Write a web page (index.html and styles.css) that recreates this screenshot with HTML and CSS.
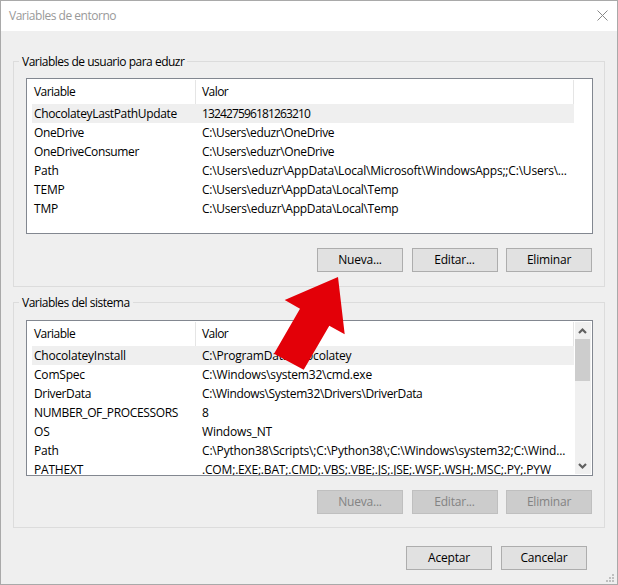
FILE: index.html
```html
<!DOCTYPE html>
<html lang="es">
<head>
<meta charset="utf-8">
<title>Variables de entorno</title>
<link rel="stylesheet" href="styles.css">
</head>
<body>
<div class="window">
  <header class="titlebar">
    <span class="title">Variables de entorno</span>
    <svg class="close" width="11" height="11" viewBox="0 0 11 11"><path d="M.5.5l10 10M10.5.5l-10 10"/></svg>
  </header>

  <main class="content">
    <fieldset class="group">
      <legend>Variables de usuario para eduzr</legend>
      <div class="list">
        <div class="table">
          <div class="row head"><span>Variable</span><span>Valor</span></div>
          <div class="row selected"><span class="tight">ChocolateyLastPathUpdate</span><span class="digits">132427596181263210</span></div>
          <div class="row"><span class="tight">OneDrive</span><span class="tight">C:\Users\eduzr\OneDrive</span></div>
          <div class="row"><span class="tight">OneDriveConsumer</span><span class="tight">C:\Users\eduzr\OneDrive</span></div>
          <div class="row"><span>Path</span><span>C:\Users\eduzr\AppData\Local\Microsoft\WindowsApps;;C:\Users\...</span></div>
          <div class="row"><span>TEMP</span><span class="snug">C:\Users\eduzr\AppData\Local\Temp</span></div>
          <div class="row"><span>TMP</span><span class="snug">C:\Users\eduzr\AppData\Local\Temp</span></div>
        </div>
      </div>
      <div class="actions">
        <button>Nueva...</button><button>Editar...</button><button>Eliminar</button>
      </div>
    </fieldset>

    <fieldset class="group system">
      <legend>Variables del sistema</legend>
      <div class="list">
        <div class="table">
          <div class="row head"><span>Variable</span><span>Valor</span></div>
          <div class="row selected"><span>ChocolateyInstall</span><span>C:\ProgramData\chocolatey</span></div>
          <div class="row"><span>ComSpec</span><span>C:\Windows\system32\cmd.exe</span></div>
          <div class="row"><span class="tight">DriverData</span><span class="tight">C:\Windows\System32\Drivers\DriverData</span></div>
          <div class="row"><span class="tight">NUMBER_OF_PROCESSORS</span><span>8</span></div>
          <div class="row"><span>OS</span><span>Windows_NT</span></div>
          <div class="row"><span>Path</span><span class="loose">C:\Python38\Scripts\;C:\Python38\;C:\Windows\system32;C:\Wind...</span></div>
          <div class="row"><span>PATHEXT</span><span class="loose">.COM;.EXE;.BAT;.CMD;.VBS;.VBE;.JS;.JSE;.WSF;.WSH;.MSC;.PY;.PYW</span></div>
        </div>
        <div class="scrollbar">
          <svg class="chevron" width="15" height="17" viewBox="0 0 15 17"><path d="M4 11L7.5 7.5L11 11"/></svg>
          <div class="thumb"></div>
          <svg class="chevron down" width="15" height="17" viewBox="0 0 15 17"><path d="M4 7L7.5 10.5L11 7"/></svg>
        </div>
      </div>
      <div class="actions">
        <button disabled>Nueva...</button><button disabled>Editar...</button><button disabled>Eliminar</button>
      </div>
    </fieldset>
  </main>

  <footer class="footer">
    <button>Aceptar</button><button>Cancelar</button>
  </footer>

  <svg class="grip" width="8" height="8" viewBox="0 0 8 8"><path d="M6 0h2v2H6zM3 3h2v2H3zM6 3h2v2H6zM0 6h2v2H0zM3 6h2v2H3zM6 6h2v2H6z"/></svg>
  <svg class="pointer" width="72" height="94" viewBox="0 0 72 94"><path d="M64 1L70.7 58.3L55.3 49.7L29.7 93.8L0 77.8L26 32.7L10.7 24z"/></svg>
</div>
</body>
</html>
```
FILE: styles.css
```css
* { box-sizing: border-box; }

body {
  margin: 0;
  font: 12px/19px "Open Sans", "Noto Sans", sans-serif;
  letter-spacing: -0.2px;
  color: #000;
}

.window {
  position: relative;
  width: 618px;
  height: 585px;
  border: 1px solid #a9a9a9;
  background: #efefef;
  overflow: hidden;
}

.titlebar {
  display: flex;
  justify-content: space-between;
  height: 30px;
  padding: 5px 9px 0 8px;
  background: #fff;
  color: #999;
}

.title { letter-spacing: -0.48px; }
.close { margin-top: 4px; fill: none; stroke: #888; stroke-width: 1; }

.content {
  display: flex;
  flex-direction: column;
  gap: 6px;
  padding: 21px 12px 0;
}

.group {
  width: 592px;
  height: 235px;
  min-width: 0;
  margin: 0;
  padding: 7px 11px 0 12px;
  border: 1px solid #dcdcdc;
}

.group legend {
  height: 19px;
  margin-left: -7px;
  padding: 0 3px;
  letter-spacing: -0.49px;
}

.system { padding-top: 8px; }

.list {
  display: flex;
  width: 567px;
  height: 156px;
  padding: 1px;
  border: 1px solid #828790;
  background: #fff;
  overflow: hidden;
}

.table { flex: none; width: 546px; }

.row {
  display: grid;
  grid-template-columns: 161px 1fr;
  height: 19px;
  margin-left: 4px;
  padding-left: 2px;
  white-space: pre;
}

.row span + span { padding-left: 7px; }

.row.head {
  height: 24px;
  border-right: 1px solid #e5e5e5;
  line-height: 24px;
  letter-spacing: -0.55px;
}

.row.head span + span { padding-left: 6px; border-left: 1px solid #e5e5e5; }
.row.selected { background: #efefef; }

.tight { letter-spacing: -0.36px; }
.snug { letter-spacing: -0.29px; }
.loose { letter-spacing: -0.17px; }
.digits { letter-spacing: -0.86px; }

.scrollbar {
  display: flex;
  flex-direction: column;
  width: 16px;
  height: 152px;
  margin-left: 1px;
  background: #f0f0f0;
}

.thumb { width: 15px; height: 42px; background: #cdcdcd; }
.chevron { flex: none; fill: none; stroke: #606060; stroke-width: 2.2; }
.chevron.down { margin-top: auto; }

.actions {
  display: flex;
  justify-content: flex-end;
  gap: 8.5px;
  margin: 14px 1px 0 0;
}

button {
  width: 86px;
  height: 24px;
  padding: 0;
  border: 1px solid #adadad;
  background: #e1e1e1;
  color: #000;
  font: inherit;
  letter-spacing: inherit;
  line-height: 22px;
}

button:disabled { border-color: #bfbfbf; background: #ccc; color: #838383; }

.footer {
  display: flex;
  justify-content: flex-end;
  gap: 9px;
  padding: 18px 30px 0 0;
}

.grip { position: absolute; right: 3px; bottom: 2px; fill: #bfbfbf; }
.pointer { position: absolute; left: 273px; top: 275px; fill: #e30008; }
```
